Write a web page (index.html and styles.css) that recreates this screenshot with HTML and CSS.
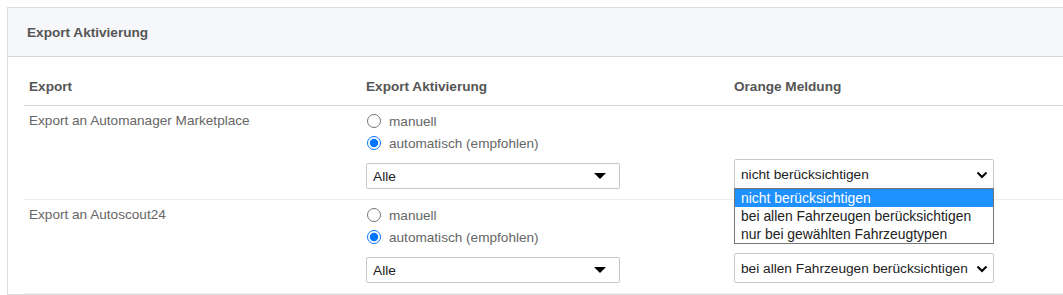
FILE: index.html
```html
<!DOCTYPE html>
<html lang="de">
<head>
<meta charset="UTF-8">
<meta name="viewport" content="width=device-width, initial-scale=1.0">
<title>Export Aktivierung</title>
<link rel="stylesheet" href="styles.css">
</head>
<body>
<div class="page">
    <div class="card">
        <div class="card-head">Export Aktivierung</div>
        <div class="card-body">
            <div class="grid head-row">
                <div class="cell">Export</div>
                <div class="cell">Export Aktivierung</div>
                <div class="cell">Orange Meldung</div>
            </div>

            <div class="grid row">
                <div class="cell name">Export an Automanager Marketplace</div>
                <div class="cell activation">
                    <label class="radio"><input type="radio" name="am"> manuell</label>
                    <label class="radio"><input type="radio" name="am" checked> automatisch (empfohlen)</label>
                    <div class="select-wrap short">
                        <select class="select"><option>Alle</option></select>
                        <svg class="caret" width="12" height="6" viewBox="0 0 12 6"><path d="M0 0H12L6 6Z" fill="#000"/></svg>
                    </div>
                </div>
                <div class="cell orange">
                    <div class="select-wrap tall">
                        <select class="select">
                            <option selected>nicht berücksichtigen</option>
                            <option>bei allen Fahrzeugen berücksichtigen</option>
                            <option>nur bei gewählten Fahrzeugtypen</option>
                        </select>
                        <svg class="chevron" width="12" height="8" viewBox="0 0 12 8"><path d="M1.5 1.5L6 6L10.5 1.5" fill="none" stroke="#000" stroke-width="2"/></svg>
                        <ul class="dropdown">
                            <li class="active">nicht berücksichtigen</li>
                            <li>bei allen Fahrzeugen berücksichtigen</li>
                            <li>nur bei gewählten Fahrzeugtypen</li>
                        </ul>
                    </div>
                </div>
            </div>

            <div class="grid row">
                <div class="cell name">Export an Autoscout24</div>
                <div class="cell activation">
                    <label class="radio"><input type="radio" name="as"> manuell</label>
                    <label class="radio"><input type="radio" name="as" checked> automatisch (empfohlen)</label>
                    <div class="select-wrap short">
                        <select class="select"><option>Alle</option></select>
                        <svg class="caret" width="12" height="6" viewBox="0 0 12 6"><path d="M0 0H12L6 6Z" fill="#000"/></svg>
                    </div>
                </div>
                <div class="cell orange">
                    <div class="select-wrap tall">
                        <select class="select">
                            <option>nicht berücksichtigen</option>
                            <option selected>bei allen Fahrzeugen berücksichtigen</option>
                            <option>nur bei gewählten Fahrzeugtypen</option>
                        </select>
                        <svg class="chevron" width="12" height="8" viewBox="0 0 12 8"><path d="M1.5 1.5L6 6L10.5 1.5" fill="none" stroke="#000" stroke-width="2"/></svg>
                    </div>
                </div>
            </div>
        </div>
    </div>
</div>
</body>
</html>
```

FILE: styles.css
```css
body {
    margin: 0;
    font-family: "Liberation Sans", Arial, sans-serif;
    font-size: 13.6px;
    color: #666;
    background: #fff;
}

.page {
    padding: 7px 0 0 7px;
    overflow: hidden;
    height: 288px;
}

.card {
    border: 1px solid #dcdcdc;
    margin-right: -20px;
    background: #fff;
}

.card-head {
    height: 48px;
    line-height: 49px;
    padding-left: 19px;
    background: #f6f7fa;
    border-bottom: 1px solid #d6d6d6;
    font-weight: bold;
    color: #555;
}

.card-body {
    padding: 10px 0 0 16px;
}

.grid {
    display: grid;
    grid-template-columns: 337px 368px 1fr;
}

.cell {
    padding: 0 5px;
}

.head-row {
    height: 38px;
    align-items: center;
    border-bottom: 1px solid #d4d4d4;
    font-weight: bold;
    color: #555;
}

.row {
    padding: 4px 0 10px;
    border-bottom: 1px solid #eee;
}

.name {
    line-height: 22px;
}

.activation {
    display: flex;
    flex-direction: column;
}

.radio {
    display: flex;
    align-items: center;
    height: 22px;
}

.radio input {
    width: 14px;
    height: 14px;
    margin: 0 8px 0 1px;
}

.orange {
    display: flex;
    align-items: flex-end;
}

.select-wrap {
    position: relative;
}

.select-wrap.short {
    margin-top: 9px;
    width: 254px;
    height: 26px;
}

.select-wrap.tall {
    width: 260px;
    height: 30px;
}

.select {
    appearance: none;
    -webkit-appearance: none;
    width: 100%;
    height: 100%;
    margin: 0;
    padding: 0 6px;
    border: 1px solid #c8c8c8;
    border-radius: 2px;
    background: #fff;
    font-family: "Liberation Sans", Arial, sans-serif;
    font-size: 13.7px;
    color: #222;
}

.caret {
    position: absolute;
    right: 14px;
    top: 10px;
    pointer-events: none;
}

.chevron {
    position: absolute;
    right: 6px;
    top: 12px;
    pointer-events: none;
}

.dropdown {
    position: absolute;
    left: 0;
    top: 29px;
    width: 258px;
    margin: 0;
    padding: 0;
    list-style: none;
    background: #fff;
    border: 1px solid #767676;
    font-size: 13.9px;
    color: #222;
    z-index: 2;
}

.dropdown li {
    height: 18px;
    line-height: 18px;
    padding-left: 6px;
}

.dropdown li.active {
    background: #1e90ff;
    color: #fff;
}
```
